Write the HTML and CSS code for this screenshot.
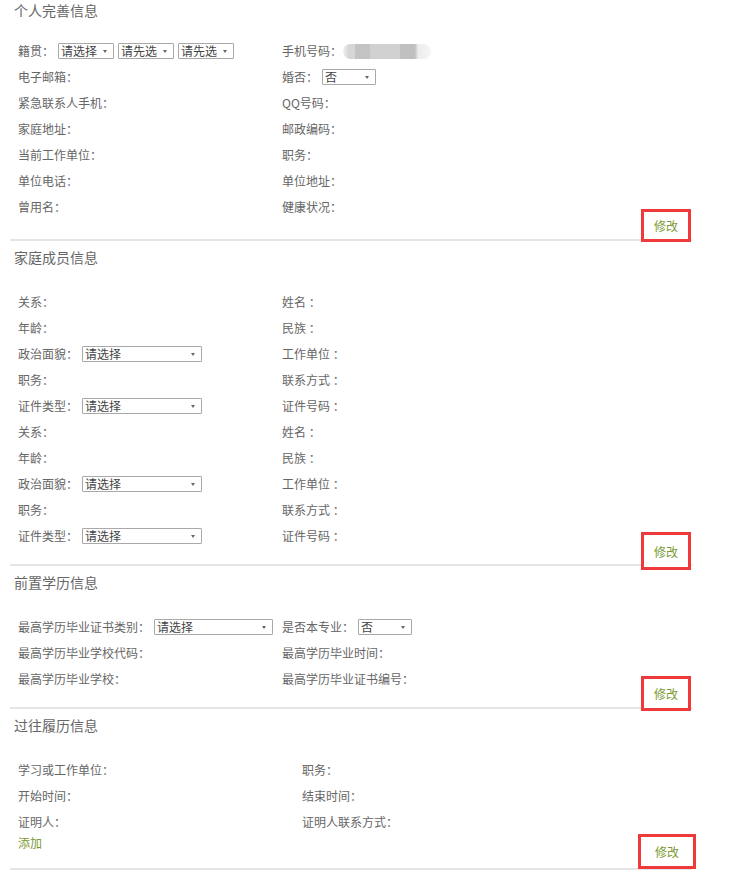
FILE: index.html
```html
<!DOCTYPE html>
<html lang="zh-CN">
<head>
    <meta charset="UTF-8">
    <meta name="viewport" content="width=device-width, initial-scale=1.0">
    <title>个人信息</title>
    <link rel="stylesheet" href="styles.css">
</head>
<body>
    <!-- 个人完善信息 -->
    <div class="section section-first">
        <div class="section-title">个人完善信息</div>
        <div class="fields">
            <div class="field">籍贯：<span class="select select-sm"><span class="select-text">请选择</span><i class="arrow"></i></span><span class="select select-sm"><span class="select-text">请先选</span><i class="arrow"></i></span><span class="select select-sm"><span class="select-text">请先选</span><i class="arrow"></i></span></div>
            <div class="field">手机号码：<span class="blur"></span></div>
            <div class="field">电子邮箱：</div>
            <div class="field">婚否：<span class="select select-xs"><span class="select-text">否</span><i class="arrow"></i></span></div>
            <div class="field">紧急联系人手机：</div>
            <div class="field">QQ号码：</div>
            <div class="field">家庭地址：</div>
            <div class="field">邮政编码：</div>
            <div class="field">当前工作单位：</div>
            <div class="field">职务：</div>
            <div class="field">单位电话：</div>
            <div class="field">单位地址：</div>
            <div class="field">曾用名：</div>
            <div class="field">健康状况：</div>
        </div>
        <div class="section-foot foot-1">
            <a class="edit-btn">修改</a>
        </div>
    </div>

    <!-- 家庭成员信息 -->
    <div class="section">
        <div class="section-title">家庭成员信息</div>
        <div class="fields">
            <div class="field">关系：</div>
            <div class="field">姓名 ：</div>
            <div class="field">年龄：</div>
            <div class="field">民族 ：</div>
            <div class="field">政治面貌：<span class="select select-lg"><span class="select-text">请选择</span><i class="arrow"></i></span></div>
            <div class="field">工作单位 ：</div>
            <div class="field">职务：</div>
            <div class="field">联系方式 ：</div>
            <div class="field">证件类型：<span class="select select-lg"><span class="select-text">请选择</span><i class="arrow"></i></span></div>
            <div class="field">证件号码 ：</div>
            <div class="field">关系：</div>
            <div class="field">姓名 ：</div>
            <div class="field">年龄：</div>
            <div class="field">民族 ：</div>
            <div class="field">政治面貌：<span class="select select-lg"><span class="select-text">请选择</span><i class="arrow"></i></span></div>
            <div class="field">工作单位 ：</div>
            <div class="field">职务：</div>
            <div class="field">联系方式 ：</div>
            <div class="field">证件类型：<span class="select select-lg"><span class="select-text">请选择</span><i class="arrow"></i></span></div>
            <div class="field">证件号码 ：</div>
        </div>
        <div class="section-foot foot-2">
            <a class="edit-btn btn-tall">修改</a>
        </div>
    </div>

    <!-- 前置学历信息 -->
    <div class="section">
        <div class="section-title">前置学历信息</div>
        <div class="fields">
            <div class="field">最高学历毕业证书类别：<span class="select select-md"><span class="select-text">请选择</span><i class="arrow"></i></span></div>
            <div class="field">是否本专业：<span class="select select-xs"><span class="select-text">否</span><i class="arrow"></i></span></div>
            <div class="field">最高学历毕业学校代码：</div>
            <div class="field">最高学历毕业时间：</div>
            <div class="field">最高学历毕业学校：</div>
            <div class="field">最高学历毕业证书编号：</div>
        </div>
        <div class="section-foot foot-3">
            <a class="edit-btn btn-mid">修改</a>
        </div>
    </div>

    <!-- 过往履历信息 -->
    <div class="section">
        <div class="section-title">过往履历信息</div>
        <div class="fields fields-wide">
            <div class="field">学习或工作单位：</div>
            <div class="field">职务：</div>
            <div class="field">开始时间：</div>
            <div class="field">结束时间：</div>
            <div class="field">证明人：</div>
            <div class="field">证明人联系方式：</div>
        </div>
        <div class="section-foot foot-4">
            <a class="add-link">添加</a>
            <a class="edit-btn btn-wide">修改</a>
        </div>
    </div>
</body>
</html>
```

FILE: styles.css
```css
html, body { margin: 0; padding: 0; background-color: #fff; }
body { font-family: "Noto Sans CJK SC", "Microsoft YaHei", sans-serif; font-size: 12px; color: #666; }

/* 每一块信息 */
.section {
width: 682px;
margin-left: 10px;
padding-top: 6px;
border-bottom: 2px solid #e5e5e5;
}
.section-first { padding-top: 0; }

.section-title { font-size: 14px; line-height: 20px; padding-left: 4px; color: #666; }
.section-first .section-title { line-height: 22px; margin-top: -1px; }

/* 两列字段 */
.fields {
display: grid;
grid-template-columns: 264px 1fr;
grid-auto-rows: 26px;
align-items: center;
margin-top: 22px;
padding-left: 8px;
}
.section-first .fields { margin-top: 17px; }
.fields-wide { grid-template-columns: 284px 1fr; }

.field { display: flex; align-items: center; line-height: 16px; white-space: nowrap; }

/* 假下拉框 */
.select {
display: flex;
align-items: center;
height: 16px;
box-sizing: border-box;
border: 1px solid #a9a9a9;
border-radius: 1px;
padding-left: 2px;
margin-left: 4px;
color: #444;
line-height: 14px;
}
.select-text { flex: 1; white-space: nowrap; }
.select-sm { width: 56px; }
.select-xs { width: 54px; }
.select-md { width: 119px; }
.select-lg { width: 120px; }
.arrow {
flex: none;
width: 0;
height: 0;
margin: 0 6px 0 3px;
border-left: 2px solid transparent;
border-right: 2px solid transparent;
border-top: 3px solid #666;
}

/* 手机号码打码 */
.blur {
display: block;
width: 88px;
height: 15px;
margin-left: 1px;
border-radius: 8px;
background: linear-gradient(to right, #eeeeee 0, #d6d6d6 6px, #d6d6d6 12px, #c3c3c3 12px, #c3c3c3 27px, #d1d1d1 27px, #d1d1d1 57px, #c0c0c0 57px, #c0c0c0 72px, #ececec 75px, #f6f6f6 88px);
}

/* 底部修改按钮 */
.section-foot { display: flex; justify-content: flex-end; align-items: flex-start; }
.foot-1 { margin-top: -11px; margin-bottom: -3px; }
.foot-2 { margin-top: -17px; margin-bottom: -6px; }
.foot-3 { margin-top: -16px; margin-bottom: -4px; }
.foot-4 { margin-top: -1px; margin-bottom: -1px; justify-content: space-between; padding-left: 8px; }

.edit-btn {
display: flex;
align-items: center;
justify-content: center;
position: relative;
width: 50px;
height: 33px;
box-sizing: border-box;
margin-right: 1px;
border: 3px solid #ee3a3a;
background-color: #fff;
color: #7c9a34;
font-size: 12px;
cursor: pointer;
}
.btn-tall { height: 38px; }
.btn-mid { height: 35px; }
.btn-wide { width: 58px; height: 35px; margin-right: -4px; }

.add-link { margin-top: 1px; line-height: 16px; color: #7c9a34; cursor: pointer; }
```
